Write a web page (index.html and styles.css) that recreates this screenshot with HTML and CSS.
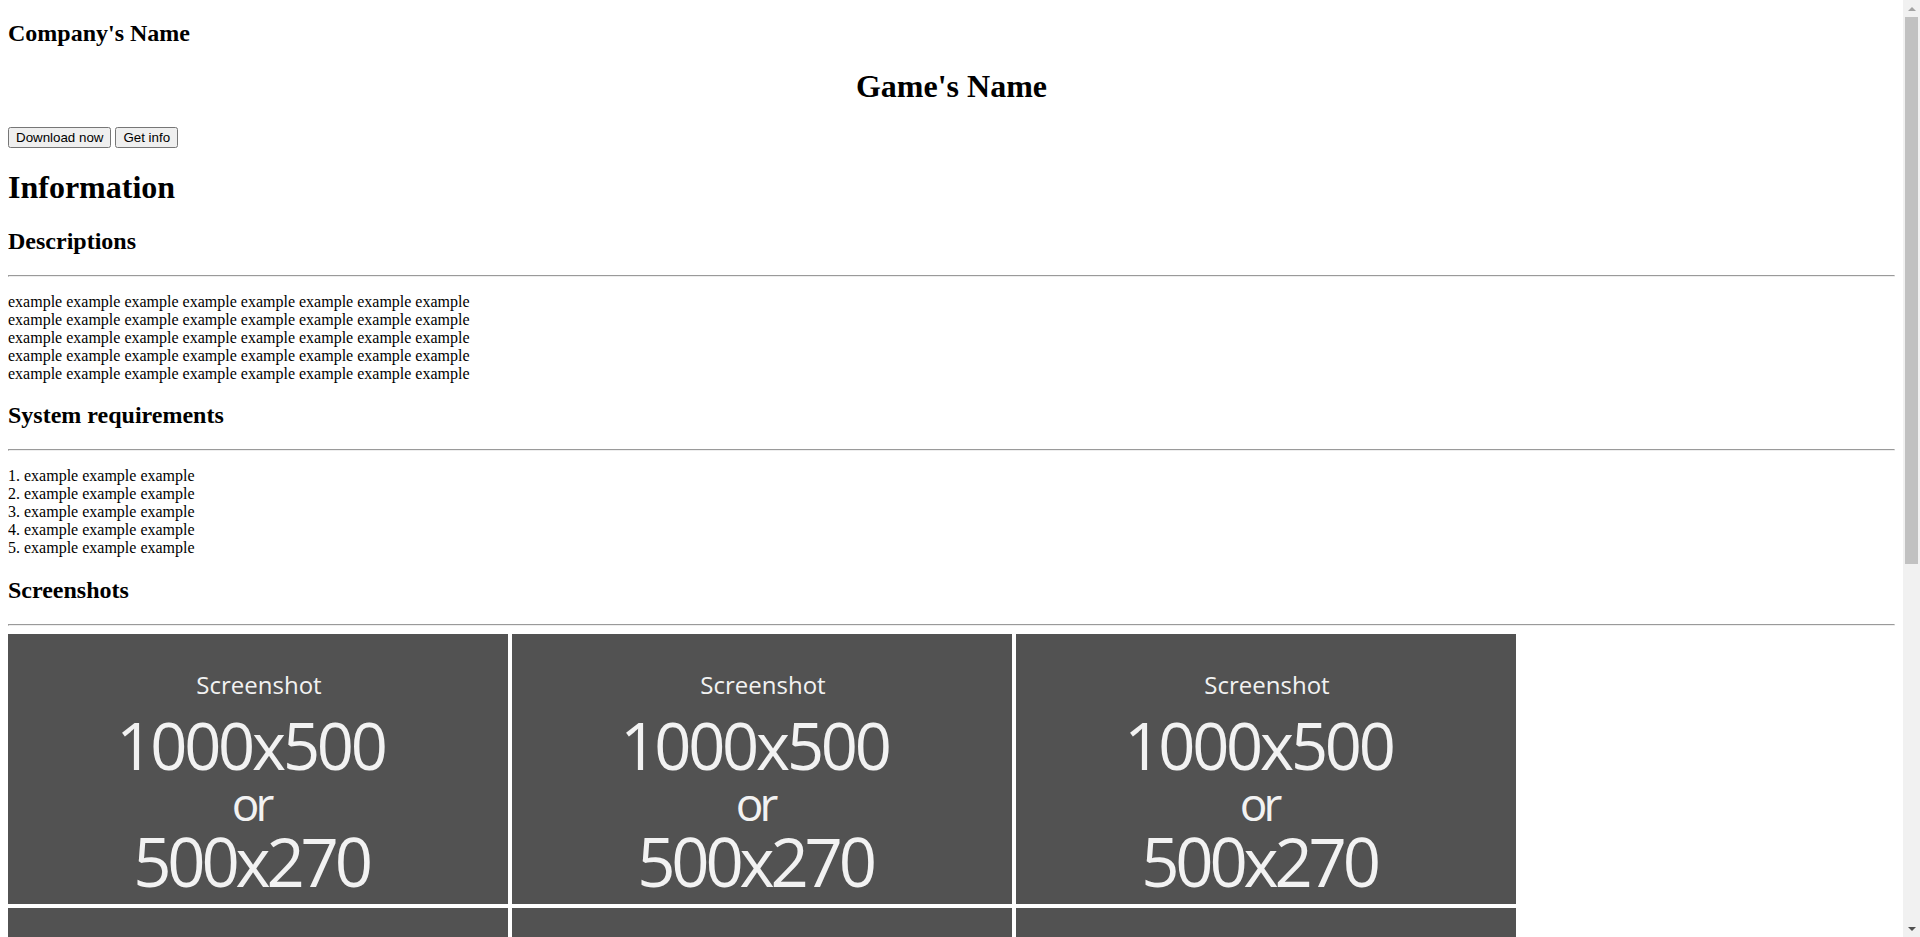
FILE: index.html
```html
<!DOCTYPE html>
<html lang="en">
<head>
<meta charset="utf-8">
<title>Game's Name</title>
<link rel="stylesheet" href="styles.css">
</head>
<body>
<header class="site-header">
  <h2 class="company">Company's Name</h2>
  <h1 class="game-title">Game's Name</h1>
  <div class="actions">
    <button class="btn" type="button">Download now</button>
    <button class="btn" type="button">Get info</button>
  </div>
</header>
<main class="content">
  <h1 class="section-title">Information</h1>

  <h2 class="sub-title">Descriptions</h2>
  <hr class="rule">
  <p class="text">example example example example example example example example<br>example example example example example example example example<br>example example example example example example example example<br>example example example example example example example example<br>example example example example example example example example</p>

  <h2 class="sub-title">System requirements</h2>
  <hr class="rule">
  <p class="text">1. example example example<br>2. example example example<br>3. example example example<br>4. example example example<br>5. example example example</p>

  <h2 class="sub-title">Screenshots</h2>
  <hr class="rule">
  <div class="gallery">
    <div class="shot"><span class="shot-label">Screenshot</span><span class="shot-big">1000x500</span><span class="shot-or">or</span><span class="shot-big2">500x270</span></div>
    <div class="shot"><span class="shot-label">Screenshot</span><span class="shot-big">1000x500</span><span class="shot-or">or</span><span class="shot-big2">500x270</span></div>
    <div class="shot"><span class="shot-label">Screenshot</span><span class="shot-big">1000x500</span><span class="shot-or">or</span><span class="shot-big2">500x270</span></div>
    <div class="shot"><span class="shot-label">Screenshot</span><span class="shot-big">1000x500</span><span class="shot-or">or</span><span class="shot-big2">500x270</span></div>
    <div class="shot"><span class="shot-label">Screenshot</span><span class="shot-big">1000x500</span><span class="shot-or">or</span><span class="shot-big2">500x270</span></div>
    <div class="shot"><span class="shot-label">Screenshot</span><span class="shot-big">1000x500</span><span class="shot-or">or</span><span class="shot-big2">500x270</span></div>
    <div class="shot"><span class="shot-label">Screenshot</span><span class="shot-big">1000x500</span><span class="shot-or">or</span><span class="shot-big2">500x270</span></div>
    <div class="shot"><span class="shot-label">Screenshot</span><span class="shot-big">1000x500</span><span class="shot-or">or</span><span class="shot-big2">500x270</span></div>
    <div class="shot"><span class="shot-label">Screenshot</span><span class="shot-big">1000x500</span><span class="shot-or">or</span><span class="shot-big2">500x270</span></div>
  </div>
</main>
<div class="scrollbar" aria-hidden="true">
  <div class="sb-btn"><span class="sb-arrow-up"></span></div>
  <div class="sb-track"><div class="sb-thumb"></div></div>
  <div class="sb-btn"><span class="sb-arrow-down"></span></div>
</div>
</body>
</html>
```

FILE: styles.css
```css
html {
  background: #ffffff;
  scrollbar-width: none;
}

::-webkit-scrollbar {
  display: none;
}

body {
  margin: 0 25px 8px 8px;
  font-family: "Liberation Serif", "Times New Roman", serif;
  font-size: 16px;
  color: #000000;
}

.company {
  font-size: 24px;
  font-weight: bold;
  margin: 19.92px 0;
}

.game-title {
  font-size: 32px;
  font-weight: bold;
  margin: 21.44px 0;
  text-align: center;
}

.actions {
  margin: 0;
}

.btn {
  font-family: "Liberation Sans", Arial, sans-serif;
  font-size: 13.333px;
}

.section-title {
  font-size: 32px;
  font-weight: bold;
  margin: 21.44px 0;
}

.sub-title {
  font-size: 24px;
  font-weight: bold;
  margin: 19.92px 0;
}

.rule {
  margin: 8px 0;
  border-style: inset;
  border-width: 1px;
  color: gray;
  height: 0;
  overflow: hidden;
}

.text {
  margin: 16px 0;
}

.gallery {
  display: flex;
  flex-wrap: wrap;
  gap: 4px;
}

.shot {
  display: flex;
  flex-direction: column;
  align-items: center;
  box-sizing: border-box;
  width: 500px;
  height: 270px;
  padding-top: 31px;
  background: #525252;
  color: #f2f2f2;
  font-family: "Open Sans", "Noto Sans", sans-serif;
  text-align: center;
}

.shot-label,
.shot-big,
.shot-or,
.shot-big2 {
  display: block;
  white-space: nowrap;
  flex: none;
}

.shot-label {
  font-size: 24px;
  line-height: 40px;
  padding-left: 2px;
}

.shot-big {
  font-size: 65px;
  line-height: 80px;
  letter-spacing: -3.2px;
  padding-right: 15px;
}

.shot-or {
  font-size: 46px;
  line-height: 37px;
  letter-spacing: -4px;
  padding-right: 14px;
}

.shot-big2 {
  font-size: 67px;
  line-height: 78px;
  letter-spacing: -4.2px;
  padding-right: 14px;
}

.scrollbar {
  position: fixed;
  top: 0;
  right: 0;
  bottom: 0;
  width: 17px;
  display: flex;
  flex-direction: column;
  background: #f1f1f1;
}

.sb-btn {
  flex: none;
  height: 17px;
  display: flex;
  align-items: center;
  justify-content: center;
}

.sb-arrow-up {
  width: 0;
  height: 0;
  border-left: 4px solid transparent;
  border-right: 4px solid transparent;
  border-bottom: 4px solid #a3a3a3;
}

.sb-arrow-down {
  width: 0;
  height: 0;
  border-left: 4px solid transparent;
  border-right: 4px solid transparent;
  border-top: 4px solid #505050;
}

.sb-track {
  flex: 1;
  display: flex;
  flex-direction: column;
  padding: 0 2px;
}

.sb-thumb {
  height: 547px;
  background: #c1c1c1;
}
```
